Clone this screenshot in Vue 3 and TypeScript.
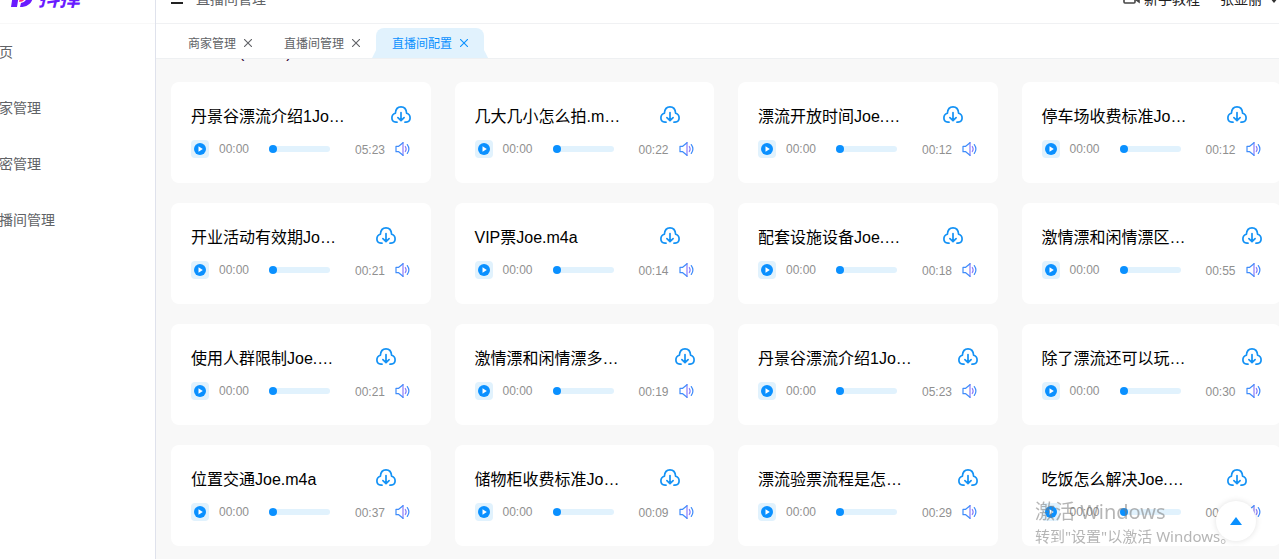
<script setup lang="ts">
import { ref } from 'vue'

interface Tab {
  label: string
  active: boolean
}

interface Track {
  title: string
  duration: string
  wide?: boolean
}

const menu: string[] = ['首页', '商家管理', '卡密管理', '直播间管理']

const tabs: Tab[] = [
  { label: '商家管理', active: false },
  { label: '直播间管理', active: false },
  { label: '直播间配置', active: true },
]

const tracks = ref<Track[]>([
  { title: '丹景谷漂流介绍1Jo…', duration: '05:23', wide: true },
  { title: '几大几小怎么拍.m…', duration: '00:22' },
  { title: '漂流开放时间Joe.…', duration: '00:12' },
  { title: '停车场收费标准Jo…', duration: '00:12' },
  { title: '开业活动有效期Jo…', duration: '00:21' },
  { title: 'VIP票Joe.m4a', duration: '00:14' },
  { title: '配套设施设备Joe.…', duration: '00:18' },
  { title: '激情漂和闲情漂区…', duration: '00:55', wide: true },
  { title: '使用人群限制Joe.…', duration: '00:21' },
  { title: '激情漂和闲情漂多…', duration: '00:19', wide: true },
  { title: '丹景谷漂流介绍1Jo…', duration: '05:23', wide: true },
  { title: '除了漂流还可以玩…', duration: '00:30', wide: true },
  { title: '位置交通Joe.m4a', duration: '00:37' },
  { title: '储物柜收费标准Jo…', duration: '00:09' },
  { title: '漂流验票流程是怎…', duration: '00:29', wide: true },
  { title: '吃饭怎么解决Joe.…', duration: '00:30' },
])
</script>

<template>
  <div class="page">
    <aside class="sidebar">
      <div class="logo">
        <svg width="24" height="22" viewBox="0 0 24 22" aria-hidden="true">
          <path d="M4 2H9L6 21H0L2 8H0Z" fill="#6a1bff" />
          <path d="M11 3H23L22 11C21 17 17 21 9 21L10 17C14 16 16 14 17 8H10Z" fill="#6a1bff" />
          <path d="M9 11H14C14 14 12 16 8 16Z" fill="#ff2e7e" />
        </svg>
        <span>抖择</span>
      </div>
      <nav class="menu">
        <a v-for="item in menu" :key="item" href="#">{{ item }}</a>
      </nav>
    </aside>

    <main class="main">
      <header class="topbar">
        <button class="plain toggle" type="button" aria-label="折叠菜单">
          <svg width="14" height="14" viewBox="0 0 14 14">
            <path d="M1 1H13M1 6H7M1 11H13" stroke="#222" stroke-width="2" />
          </svg>
        </button>
        <span class="crumb">直播间管理</span>
        <a class="guide" href="#">
          <svg width="17" height="14" viewBox="0 0 17 14" fill="none" stroke="#444" stroke-width="1.6">
            <rect x="1" y="1" width="11" height="10" rx="1" />
            <path d="M12 5L16 2V10L12 7" />
          </svg>
          新手教程
        </a>
        <button class="plain user" type="button">
          张显丽
          <svg width="8" height="8" viewBox="0 0 8 8"><path d="M0 3H8L4 8Z" fill="#333" /></svg>
        </button>
      </header>

      <div class="tabs">
        <div v-for="tab in tabs" :key="tab.label" class="tab" :class="{ active: tab.active }">
          <a href="#">{{ tab.label }}</a>
          <button class="plain" type="button" :aria-label="'关闭' + tab.label">
            <svg width="8" height="8" viewBox="0 0 8 8">
              <path d="M0 0L8 8M8 0L0 8" stroke="currentColor" stroke-width="1.1" />
            </svg>
          </button>
        </div>
      </div>

      <section class="content">
        <div class="group-title"><span>(</span><span>)</span></div>
        <div class="cards">
          <article v-for="(track, i) in tracks" :key="i" class="card">
            <div class="card-head">
              <span class="title" :class="{ wide: track.wide }">{{ track.title }}</span>
              <button class="plain" type="button" aria-label="下载">
                <svg width="20" height="18" viewBox="0 0 20 18" fill="none" stroke="#1492f5" stroke-width="1.7" stroke-linecap="round" stroke-linejoin="round">
                  <path d="M6 16.200H5C2.600 15.900 0.900 14.200 0.900 11.900C0.900 9.600 2.300 7.900 4.400 7.300C4.600 3.500 6.800 0.900 10 0.900C13.200 0.900 15.400 3.500 15.600 7.300C17.700 7.900 19.100 9.600 19.100 11.900C19.100 14.200 17.400 15.900 15 16.200H14" />
                  <path d="M10 6.500V14.300M6.900 11.600L10 14.600L13.100 11.600" />
                </svg>
              </button>
            </div>
            <div class="player">
              <button class="plain play" type="button" aria-label="播放">
                <svg width="12" height="12" viewBox="0 0 12 12">
                  <circle cx="6" cy="6" r="6" fill="#0a90ff" />
                  <path d="M4.500 3.300L8.800 6L4.500 8.700Z" fill="#fff" />
                </svg>
              </button>
              <span class="time">00:00</span>
              <input class="seek" type="range" min="0" max="100" value="0" aria-label="播放进度" />
              <span class="time duration">{{ track.duration }}</span>
              <button class="plain volume" type="button" aria-label="音量">
                <svg width="16" height="14" viewBox="0 0 16 14" fill="none" stroke="#3f8cfa" stroke-width="1.2" stroke-linejoin="round" stroke-linecap="round">
                  <path d="M8 0.700V13.300" stroke="#8a7cfa" />
                  <path d="M8 0.700L3.700 4.300H1V9.700H3.700L8 13.300" />
                  <path d="M10.300 4.500Q12 7 10.300 9.500" stroke="#8a7cfa" />
                  <path d="M12.300 2.600Q15.500 7 12.300 11.400" />
                </svg>
              </button>
            </div>
          </article>
        </div>
      </section>
    </main>

    <button class="back-top" type="button" aria-label="回到顶部">
      <svg width="12" height="8" viewBox="0 0 12 8"><path d="M6 0L12 8H0Z" fill="#0a90ff" /></svg>
    </button>
    <div class="activation">
      <div class="activation-title">激活 Windows</div>
      <div class="activation-text">转到"设置"以激活 Windows。</div>
    </div>
  </div>
</template>

<style>
body {
  margin: 0;
}
</style>

<style scoped>
.page {
  display: flex;
  min-height: 100vh;
  overflow: hidden;
  background: #fff;
  font-family: "Liberation Sans", "Noto Sans CJK SC", sans-serif;
  font-size: 14px;
  color: #606266;
}
a {
  color: inherit;
  text-decoration: none;
}
.plain {
  display: flex;
  align-items: center;
  padding: 0;
  border: 0;
  background: none;
  font: inherit;
  color: inherit;
  cursor: pointer;
}
svg {
  display: block;
  flex: none;
}
.sidebar {
  flex: none;
  width: 155px;
  border-right: 1px solid #dfe2ec;
  overflow: hidden;
}
.logo {
  display: flex;
  align-items: center;
  gap: 3px;
  height: 54px;
  margin-top: -30px;
  padding-left: 11px;
  border-bottom: 1px solid #f8f8f8;
  box-sizing: border-box;
  font-size: 21px;
  font-weight: 700;
  font-style: italic;
  color: #6a1bff;
}
.menu {
  display: flex;
  flex-direction: column;
  margin-left: -15px;
}
.menu a {
  line-height: 56px;
  white-space: nowrap;
}
.main {
  flex: 1;
  min-width: 0;
}
.topbar {
  display: flex;
  align-items: center;
  height: 48px;
  margin-top: -25px;
  padding: 0 1px 0 14px;
  border-bottom: 1px solid #f0f1f3;
  line-height: 20px;
}
.toggle {
  margin-right: 12px;
}
.guide {
  display: flex;
  align-items: center;
  gap: 4px;
  margin-left: auto;
  color: #222;
}
.user {
  gap: 8px;
  margin-left: 20px;
  color: #222;
}
.tabs {
  display: flex;
  align-items: flex-end;
  height: 34px;
  padding-left: 16px;
  border-bottom: 1px solid #eef0f2;
  font-size: 12px;
}
.tab {
  position: relative;
  display: flex;
  align-items: center;
  gap: 8px;
  height: 30px;
  padding: 0 16px;
}
.tab a {
  padding-bottom: 2px;
}
.tab.active {
  border-radius: 8px 8px 0 0;
  background: #e1f2fd;
  color: #0a90ff;
}
.tab.active::before,
.tab.active::after {
  content: "";
  position: absolute;
  bottom: 0;
  width: 4px;
  height: 8px;
  background: #e1f2fd;
}
.tab.active::before {
  right: 100%;
  clip-path: polygon(100% 0, 100% 100%, 0 100%);
}
.tab.active::after {
  left: 100%;
  clip-path: polygon(0 0, 100% 100%, 0 100%);
}
.content {
  min-height: calc(100vh - 58px);
  box-sizing: border-box;
  padding: 0 0 13px 15px;
  background: #f8f8f8;
  overflow: hidden;
}
.group-title {
  display: flex;
  gap: 42px;
  height: 20px;
  margin-top: -16px;
  padding: 0 0 19px 68px;
  line-height: 20px;
  font-size: 16px;
  color: #303;
}
.cards {
  display: grid;
  grid-template-columns: repeat(4, 1fr);
  gap: 20px 24px;
  margin-right: -2px;
}
.card {
  height: 101px;
  box-sizing: border-box;
  padding: 20px 16px 0 20px;
  border-radius: 8px;
  background: #fff;
}
.card-head {
  display: flex;
  align-items: center;
  height: 26px;
  color: #000;
}
.title {
  flex: none;
  width: 185px;
  padding-top: 4px;
  font-size: 16px;
  line-height: 26px;
  white-space: nowrap;
}
.title.wide {
  width: 200px;
}
.player {
  display: flex;
  align-items: center;
  height: 18px;
  margin-top: 12px;
}
.play {
  justify-content: center;
  width: 18px;
  height: 18px;
  border-radius: 4px;
  background: #e1f2fd;
}
.time {
  width: 30px;
  margin-left: 10px;
  font-size: 12px;
  line-height: 18px;
  color: #909090;
}
.duration {
  margin-left: 25px;
  padding-top: 2px;
}
.seek {
  width: 61px;
  height: 8px;
  margin: 0 0 0 20px;
  appearance: none;
  background: none;
}
.seek::-webkit-slider-runnable-track {
  height: 6px;
  border-radius: 3px;
  background: #e1f2fd;
}
.seek::-webkit-slider-thumb {
  appearance: none;
  width: 8px;
  height: 8px;
  margin-top: -1px;
  border-radius: 50%;
  background: #0a90ff;
}
.volume {
  margin-left: 10px;
}
.back-top {
  position: fixed;
  right: 23px;
  bottom: 18px;
  display: flex;
  align-items: center;
  justify-content: center;
  width: 40px;
  height: 40px;
  padding: 0;
  border: 0;
  border-radius: 50%;
  background: #fff;
  box-shadow: 0 0 6px rgba(0, 0, 0, 0.12);
}
.activation {
  position: fixed;
  right: 40px;
  bottom: 12px;
  width: 204px;
  font-family: "Noto Sans", "Noto Sans CJK SC", sans-serif;
  color: rgba(120, 120, 120, 0.55);
  white-space: nowrap;
  pointer-events: none;
}
.activation-title {
  font-size: 20px;
  line-height: 26px;
}
.activation-text {
  font-size: 15px;
  line-height: 22px;
}
</style>
